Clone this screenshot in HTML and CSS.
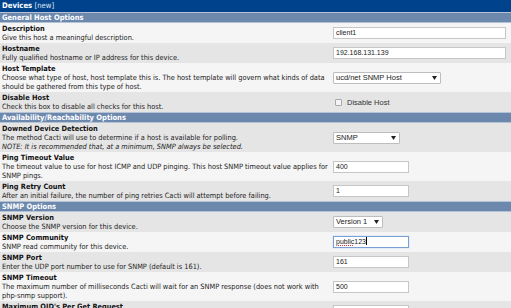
FILE: index.html
```html
<!DOCTYPE html>
<html>
<head>
<meta charset="utf-8">
<link rel="stylesheet" href="styles.css">
</head>
<body>
<div class="box">
  <div class="title"><b>Devices</b> <span class="new">[new]</span></div>

  <div class="band">General Host Options</div>
  <div class="row light">
    <div class="lab"><b>Description</b><br>Give this host a meaningful description.</div>
    <div class="ctl"><div class="input wide">client1</div></div>
  </div>
  <div class="row dark">
    <div class="lab"><b>Hostname</b><br>Fully qualified hostname or IP address for this device.</div>
    <div class="ctl"><div class="input wide">192.168.131.139</div></div>
  </div>
  <div class="row light">
    <div class="lab"><b>Host Template</b><br>Choose what type of host, host template this is. The host template will govern what kinds of data should be gathered from this type of host.</div>
    <div class="ctl"><div class="select s-tpl"><span>ucd/net SNMP Host</span><svg class="arr" width="5" height="4" viewBox="0 0 5 4"><path d="M0 0H5L2.5 4Z" fill="#222"/></svg></div></div>
  </div>
  <div class="row dark">
    <div class="lab"><b>Disable Host</b><br>Check this box to disable all checks for this host.</div>
    <div class="ctl"><label class="check"><span class="cb"></span><span>Disable Host</span></label></div>
  </div>

  <div class="band">Availability/Reachability Options</div>
  <div class="row dark">
    <div class="lab"><b>Downed Device Detection</b><br>The method Cacti will use to determine if a host is available for polling.<br><i>NOTE: It is recommended that, at a minimum, SNMP always be selected.</i></div>
    <div class="ctl"><div class="select s-snmp"><span>SNMP</span><svg class="arr" width="5" height="4" viewBox="0 0 5 4"><path d="M0 0H5L2.5 4Z" fill="#222"/></svg></div></div>
  </div>
  <div class="row light">
    <div class="lab"><b>Ping Timeout Value</b><br>The timeout value to use for host ICMP and UDP pinging. This host SNMP timeout value applies for SNMP pings.</div>
    <div class="ctl"><div class="input mid">400</div></div>
  </div>
  <div class="row dark">
    <div class="lab"><b>Ping Retry Count</b><br>After an initial failure, the number of ping retries Cacti will attempt before failing.</div>
    <div class="ctl"><div class="input mid">1</div></div>
  </div>

  <div class="band">SNMP Options</div>
  <div class="row dark">
    <div class="lab"><b>SNMP Version</b><br>Choose the SNMP version for this device.</div>
    <div class="ctl"><div class="select s-ver"><span>Version 1</span><svg class="arr" width="5" height="4" viewBox="0 0 5 4"><path d="M0 0H5L2.5 4Z" fill="#222"/></svg></div></div>
  </div>
  <div class="row light">
    <div class="lab"><b>SNMP Community</b><br>SNMP read community for this device.</div>
    <div class="ctl"><div class="input mid focus"><span class="spell">public</span>123<span class="caret"></span></div></div>
  </div>
  <div class="row dark">
    <div class="lab"><b>SNMP Port</b><br>Enter the UDP port number to use for SNMP (default is 161).</div>
    <div class="ctl"><div class="input mid">161</div></div>
  </div>
  <div class="row light">
    <div class="lab"><b>SNMP Timeout</b><br>The maximum number of milliseconds Cacti will wait for an SNMP response (does not work with php-snmp support).</div>
    <div class="ctl"><div class="input mid">500</div></div>
  </div>
  <div class="row dark">
    <div class="lab"><b>Maximum OID's Per Get Request</b><br>Specified the number of OID's that can be obtained in a single SNMP Get request.</div>
    <div class="ctl"><div class="input mid">10</div></div>
  </div>
</div>
</body>
</html>
```

FILE: styles.css
```css
html, body {
  margin: 0;
  padding: 0;
  background: #ffffff;
}
body {
  font-family: "DejaVu Sans Condensed", "DejaVu Sans", Verdana, sans-serif;
  font-size: 7.35px;
  color: #222;
  overflow: hidden;
}
.box {
  width: 511px;
}
.title {
  background: #00438c;
  color: #fff;
  height: 12px;
  line-height: 12px;
  padding-left: 2px;
  font-size: 7.7px;
}
.title .new {
  color: #dfe6f2;
}
.band {
  background: #6d88ad;
  color: #fff;
  font-weight: bold;
  box-sizing: border-box;
  height: 11px;
  line-height: 9px;
  padding-left: 2px;
  border-top: 1px solid #b4c2d6;
  border-bottom: 1px solid #b4c2d6;
  font-size: 7.5px;
}
.row {
  display: flex;
  align-items: center;
}
.row.light { background: #f5f5f5; }
.row.dark { background: #e5e5e5; }
.lab {
  width: 326px;
  padding: 1px 2px;
  line-height: 9px;
  flex: none;
}
.lab b {
  color: #111;
}
.lab i {
  font-style: italic;
}
.ctl {
  flex: 1;
  padding-left: 3px;
}
.input {
  box-sizing: border-box;
  height: 12px;
  border: 1px solid #c6c6c6;
  background: #fff;
  font-family: "Liberation Sans", Arial, sans-serif;
  font-size: 7px;
  line-height: 10px;
  padding-left: 2px;
  color: #222;
}
.input.wide { width: 173px; }
.input.mid { width: 76px; }
.input.focus {
  border-color: #7ba0d6;
  box-shadow: 0 0 1px #9bbbe8;
}
.spell {
  text-decoration: underline dotted #e03030;
}
.caret {
  display: inline-block;
  width: 1px;
  height: 8px;
  background: #000;
  vertical-align: -1px;
  margin-left: 0.5px;
}
.select {
  box-sizing: border-box;
  height: 12px;
  border: 1px solid #bdbdbd;
  border-radius: 1px;
  background: #fff;
  font-family: "Liberation Sans", Arial, sans-serif;
  font-size: 7.5px;
  line-height: 10px;
  padding-left: 2px;
  padding-right: 3px;
  display: flex;
  align-items: center;
  justify-content: space-between;
  color: #222;
}
.s-tpl { width: 108px; }
.s-snmp { width: 67px; }
.s-ver { width: 50px; }
.arr {
  display: block;
}
.check {
  display: flex;
  align-items: center;
  gap: 5px;
  font-family: "Liberation Sans", Arial, sans-serif;
  font-size: 7.5px;
  color: #333;
  padding-left: 2px;
}
.cb {
  width: 5px;
  height: 5px;
  border: 1px solid #a8a8a8;
  border-radius: 1px;
  background: #f4f4f4;
}
```
